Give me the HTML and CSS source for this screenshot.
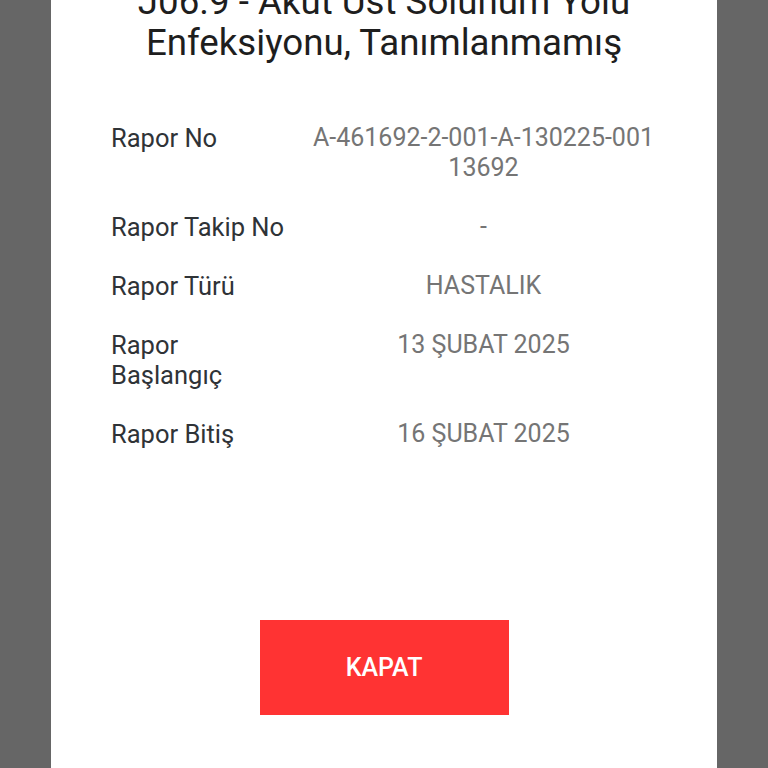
FILE: index.html
```html
<!DOCTYPE html>
<html lang="tr">
<head>
  <meta charset="UTF-8">
  <title>Rapor Detayı</title>
  <link rel="stylesheet" href="styles.css">
</head>
<body>

  <div class="dialog">
    <h1 class="title">J06.9 - Akut Üst Solunum Yolu Enfeksiyonu, Tanımlanmamış</h1>

    <div class="rows">
      <div class="row">
        <div class="label">Rapor No</div>
        <div class="value">A-461692-2-001-A-130225-001 13692</div>
      </div>
      <div class="row">
        <div class="label">Rapor Takip No</div>
        <div class="value">-</div>
      </div>
      <div class="row">
        <div class="label">Rapor Türü</div>
        <div class="value">HASTALIK</div>
      </div>
      <div class="row">
        <div class="label">Rapor Başlangıç</div>
        <div class="value">13 ŞUBAT 2025</div>
      </div>
      <div class="row">
        <div class="label">Rapor Bitiş</div>
        <div class="value">16 ŞUBAT 2025</div>
      </div>
    </div>

    <div class="actions">
      <button class="close-btn">KAPAT</button>
    </div>
  </div>

</body>
</html>
```

FILE: styles.css
```css
body {
  margin: 0;
  background: #666666;
  font-family: Roboto, "Noto Sans", sans-serif;
  overflow: hidden;
}

.dialog {
  background: #fff;
  margin: 0 51px;
  height: 768px;
  box-sizing: border-box;
  overflow: hidden;
}

.title {
  margin: -19px 0 0;
  padding: 0 40px;
  font-size: 36.7px;
  font-weight: 400;
  line-height: 41px;
  color: #1e1e1e;
  text-align: center;
}

.rows {
  display: flex;
  flex-direction: column;
  gap: 29px;
  margin-top: 60px;
  padding: 0 38px 0 60px;
}

.row {
  display: flex;
  font-size: 25.5px;
  line-height: 30px;
}

.label {
  flex: 0 0 177px;
  color: #2f3337;
}

.value {
  flex: 1;
  font-size: 25px;
  color: #757575;
  text-align: center;
}

.actions {
  display: flex;
  justify-content: center;
  margin-top: 171px;
}

.close-btn {
  width: 249px;
  height: 95px;
  background: #ff3333;
  color: #fff;
  border: none;
  font-family: Roboto, "Noto Sans", sans-serif;
  font-size: 25px;
  font-weight: 500;
  cursor: pointer;
}
```
